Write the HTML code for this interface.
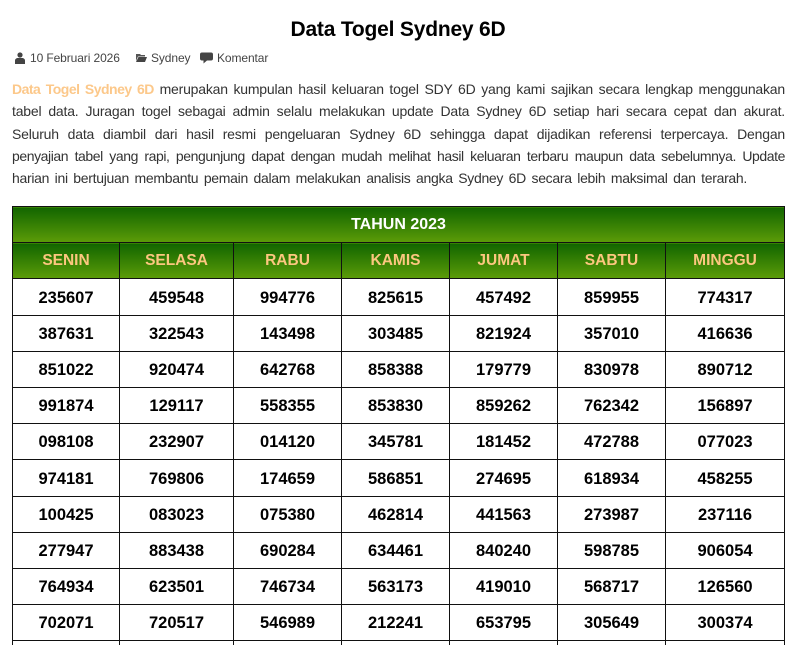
<!DOCTYPE html>
<html><head><meta charset="utf-8">
<style>
html,body{margin:0;padding:0;background:#fff;width:795px;height:645px;overflow:hidden;font-family:"Liberation Sans",sans-serif}
#w{position:relative;width:795px;height:645px;overflow:hidden}
h1{position:absolute;left:0;top:16px;width:796px;margin:0;text-align:center;font-size:21px;line-height:28px;font-weight:700;color:#000;letter-spacing:-.2px}
.m{position:absolute;top:50px;font-size:12px;line-height:16px;color:#444;letter-spacing:-.1px}
svg{position:absolute}
.l{position:absolute;left:12px;width:773px;font-size:14px;line-height:22px;color:#333;white-space:normal;text-align:justify;text-align-last:justify;letter-spacing:-.2px}
.l b{color:#fcc88a;letter-spacing:-.5px}
table{position:absolute;left:12px;top:206px;width:772px;border-collapse:collapse;table-layout:fixed}
tr{height:36px}
tr.x{height:37px}
td,th{border:1px solid #111;padding:1px 0 0;text-align:center;font-weight:700;font-size:16.5px;line-height:18px;color:#000}
th{padding:0;background:linear-gradient(#116500,#5c9c08);color:#fcc77f;font-size:15.5px}
th.t{color:#fff;font-size:16px}
</style></head><body><div id="w">
<h1>Data Togel Sydney 6D</h1>
<svg style="left:15px;top:52px" width="10" height="12" viewBox="0 0 10 12"><circle cx="5" cy="3" r="2.6" fill="#444"/><path d="M0 12V8.500C0 7 1.500 6 3 6h4c1.500 0 3 1 3 2.500V12z" fill="#444"/></svg>
<div class="m" style="left:30px">10 Februari 2026</div>
<svg style="left:136px;top:53px" width="11" height="10" viewBox="0 0 11 10"><path d="M0 1h4l1 1h4v1.500H2L0 8z" fill="#555"/><path d="M2.500 4H11L9 9H0z" fill="#444"/></svg>
<div class="m" style="left:151px">Sydney</div>
<svg style="left:200px;top:52px" width="13" height="12" viewBox="0 0 13 12"><path d="M2 .5h9a2 2 0 0 1 2 2v4a2 2 0 0 1-2 2H7L3.500 11.500V8.500H2a2 2 0 0 1-2-2v-4a2 2 0 0 1 2-2z" fill="#444"/></svg>
<div class="m" style="left:217px">Komentar</div>
<div class="l" style="top:78px"><b>Data Togel Sydney 6D</b> merupakan kumpulan hasil keluaran togel SDY 6D yang kami sajikan secara lengkap menggunakan</div>
<div class="l" style="top:100px">tabel data. Juragan togel sebagai admin selalu melakukan update Data Sydney 6D setiap hari secara cepat dan akurat.</div>
<div class="l" style="top:123px">Seluruh data diambil dari hasil resmi pengeluaran Sydney 6D sehingga dapat dijadikan referensi terpercaya. Dengan</div>
<div class="l" style="top:145px;letter-spacing:-.42px">penyajian tabel yang rapi, pengunjung dapat dengan mudah melihat hasil keluaran terbaru maupun data sebelumnya. Update</div>
<div class="l" style="top:167px;width:735px;letter-spacing:-.3px">harian ini bertujuan membantu pemain dalam melakukan analisis angka Sydney 6D secara lebih maksimal dan terarah.</div>
<table>
<colgroup><col style="width:107px"><col style="width:114px"><col style="width:108px"><col style="width:108px"><col style="width:108px"><col style="width:108px"><col style="width:119px"></colgroup>
<tr><th class="t" colspan="7">TAHUN 2023</th></tr>
<tr><th>SENIN</th><th>SELASA</th><th>RABU</th><th>KAMIS</th><th>JUMAT</th><th>SABTU</th><th>MINGGU</th></tr>
<tr class="x"><td>235607</td><td>459548</td><td>994776</td><td>825615</td><td>457492</td><td>859955</td><td>774317</td></tr>
<tr><td>387631</td><td>322543</td><td>143498</td><td>303485</td><td>821924</td><td>357010</td><td>416636</td></tr>
<tr><td>851022</td><td>920474</td><td>642768</td><td>858388</td><td>179779</td><td>830978</td><td>890712</td></tr>
<tr><td>991874</td><td>129117</td><td>558355</td><td>853830</td><td>859262</td><td>762342</td><td>156897</td></tr>
<tr><td>098108</td><td>232907</td><td>014120</td><td>345781</td><td>181452</td><td>472788</td><td>077023</td></tr>
<tr class="x"><td>974181</td><td>769806</td><td>174659</td><td>586851</td><td>274695</td><td>618934</td><td>458255</td></tr>
<tr><td>100425</td><td>083023</td><td>075380</td><td>462814</td><td>441563</td><td>273987</td><td>237116</td></tr>
<tr><td>277947</td><td>883438</td><td>690284</td><td>634461</td><td>840240</td><td>598785</td><td>906054</td></tr>
<tr><td>764934</td><td>623501</td><td>746734</td><td>563173</td><td>419010</td><td>568717</td><td>126560</td></tr>
<tr><td>702071</td><td>720517</td><td>546989</td><td>212241</td><td>653795</td><td>305649</td><td>300374</td></tr>
<tr><td>&nbsp;</td><td>&nbsp;</td><td>&nbsp;</td><td>&nbsp;</td><td>&nbsp;</td><td>&nbsp;</td><td>&nbsp;</td></tr>
</table>
</div></body></html>
